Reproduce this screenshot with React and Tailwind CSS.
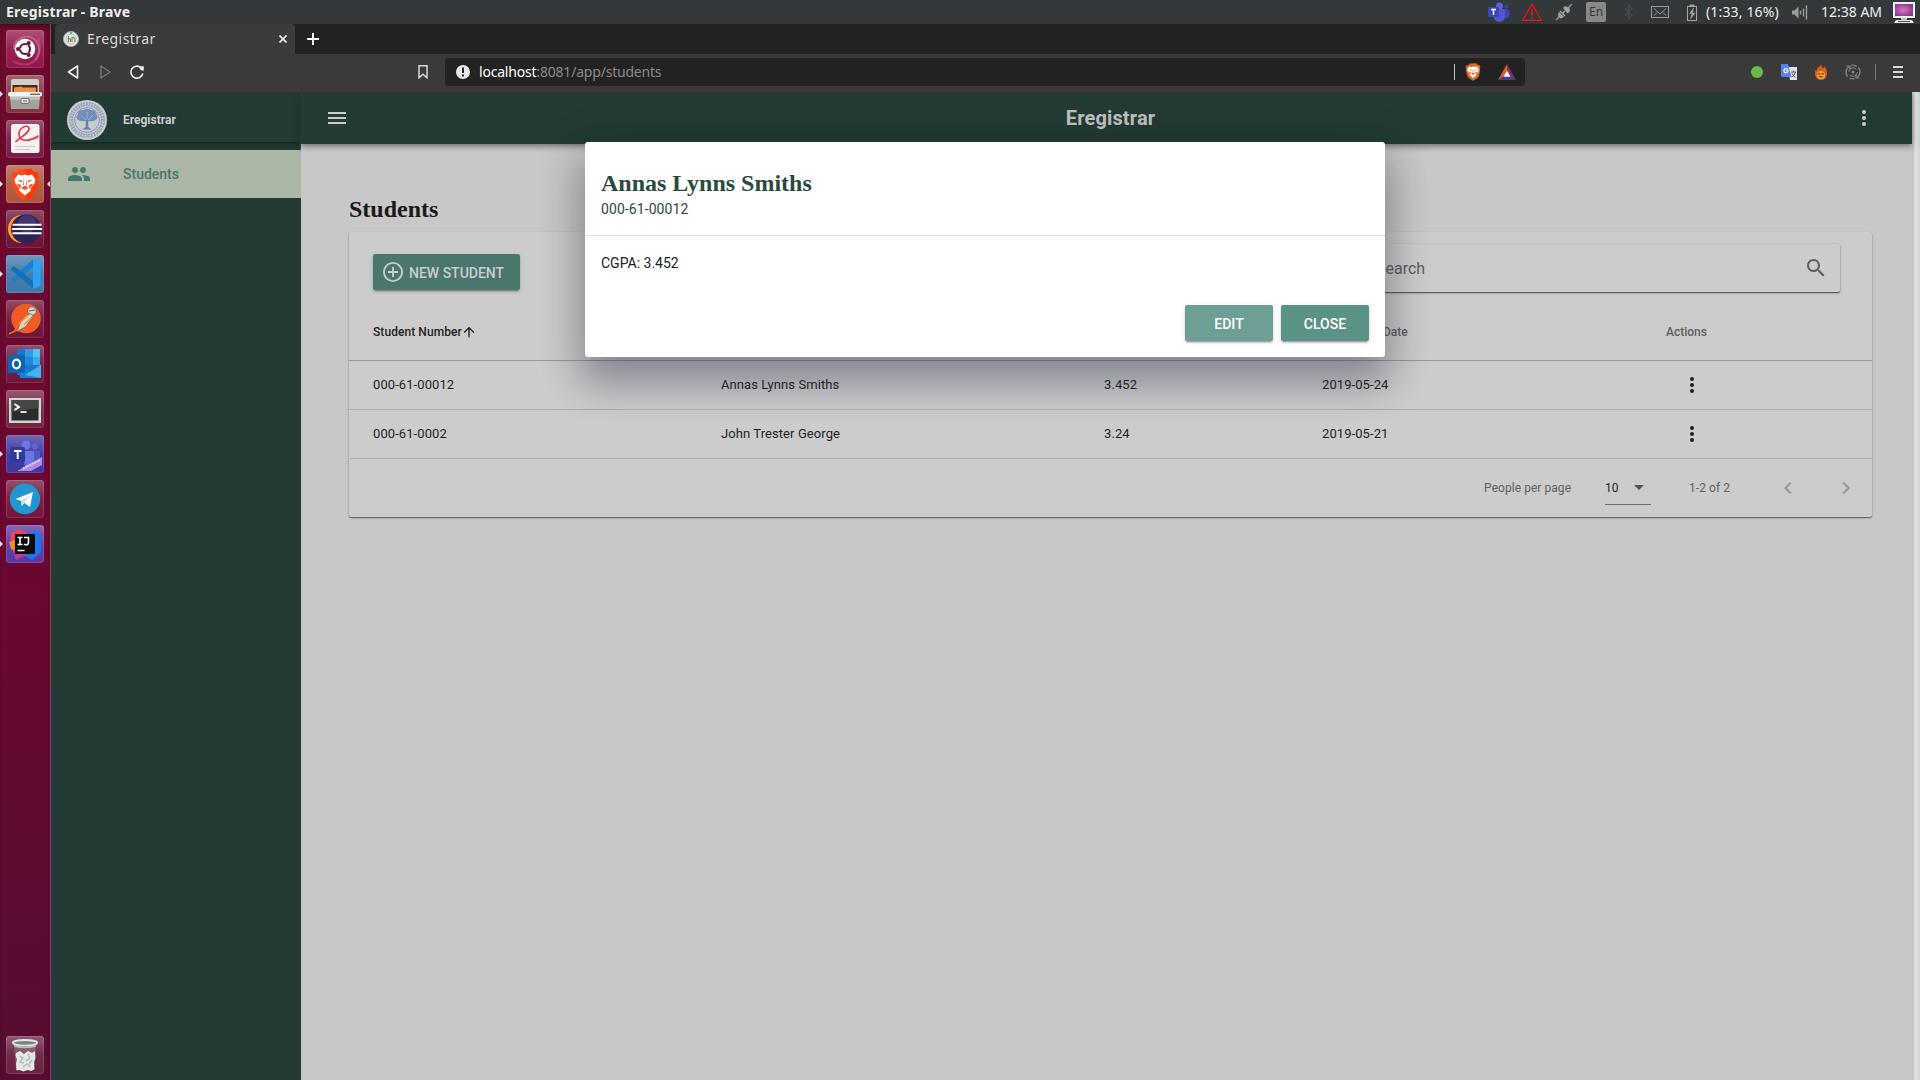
import React from "react";

const CHROME_FONT = "font-['Noto_Sans','Open_Sans',sans-serif]";

/* ---------- small shared icons ---------- */

function DotsVertical({ className }) {
  return (
    <svg viewBox="0 0 24 24" className={className} fill="currentColor">
      <circle cx="12" cy="6" r="2" />
      <circle cx="12" cy="12" r="2" />
      <circle cx="12" cy="18" r="2" />
    </svg>
  );
}

function BraveLion({ className, color = "#f4511e", edge = "#ff7a1a" }) {
  return (
    <svg viewBox="0 0 28 33" className={className}>
      <path d="M8 1h12l3 3h3l1.500 4-1 3 .5 3-3 11-4 4-6 3.500-6-3.500-4-4-3-11 .5-3-1-3L2 4h3z" fill={color} />
      <path d="M14 1h6l3 3h3l1.500 4-1 3 .5 3-3 11-4 4-6 3.500z" fill={edge} opacity=".55" />
      <path d="M7 6.500l4 1 3-1 3 1 4-1 3.500 5-1 4-4 5 .5 2-2.500 2-3.500 3-3.500-3-2.500-2 .5-2-4-5-1-4z" fill="#fff" />
      <path
        d="M6.500 11.500l5 1.300-1 1.700zM21.500 11.500l-5 1.300 1 1.700zM12.400 10.500l-.4 5.500 1 2.500-3 1.200 4 2.300 4-2.300-3-1.200 1-2.500-.4-5.500-.6 7.500h-2zM5.500 15.500l4 5.500.5-4zM22.500 15.500l-4 5.500-.5-4z"
        fill={color}
      />
    </svg>
  );
}

/* ---------- desktop panel ---------- */

function TopPanel() {
  return (
    <div className={`flex h-6 w-full items-center bg-[#33393b] text-[#eeeeec] ${CHROME_FONT}`}>
      <span className="ml-1.5 text-[14px] leading-6 font-bold whitespace-nowrap tracking-[0.2px]">Eregistrar - Brave</span>
      <div className="ml-auto flex h-6 items-center">
        <svg viewBox="0 0 22 20" className="h-5 w-[22px]">
          <circle cx="18.500" cy="4.500" r="2" fill="#3a41b0" />
          <rect x="13" y="7" width="8.500" height="9" rx="3" fill="#3c43b4" />
          <circle cx="11.500" cy="4" r="3.500" fill="#5a62d8" />
          <path d="M6 7h11v8a5.500 5 0 0 1-11 0z" fill="#5058d0" />
          <rect x="0" y="5" width="11" height="10" rx="1" fill="#3b45b8" />
          <path d="M3 7.500h5M5.500 7.500v5.500" stroke="#fff" strokeWidth="1.400" />
        </svg>
        <svg viewBox="0 0 20 18" className="ml-[12px] h-[18px] w-5" fill="none" stroke="#ee1111" strokeWidth="1.200">
          <path d="M10 1L19.300 17.300H.7z" />
          <path d="M10 6v6.500M10 14v2" strokeWidth="1.800" />
        </svg>
        <svg viewBox="0 0 18 18" className="ml-[13px] h-[18px] w-[18px]">
          <path d="M1 17l4-4M13 5l4-4" stroke="#8b8e8f" strokeWidth="1.600" />
          <path d="M4 9l5 5-3 1.500L3.500 14 3 11zM8 5l2-2 2.500 1L15 6l-.5 3-2 1.500z" fill="#a2a3a3" />
          <path d="M5 8l5 5M8 10l2-2" stroke="#a2a3a3" strokeWidth="1.500" />
        </svg>
        <span className="ml-[13px] flex h-5 w-5 items-center justify-center rounded-[2px] bg-[#888888] text-[12px] text-[#33393b]">En</span>
        <svg viewBox="0 0 10 16" className="ml-[18px] h-4 w-2.5" fill="none" stroke="#454b4d" strokeWidth="1.300">
          <path d="M1 4.500l7 7L4.500 15V1L8 4.500l-7 7" />
        </svg>
        <svg viewBox="0 0 18 12" className="ml-[17px] h-3 w-[18px]" fill="none" stroke="#9b9b9b" strokeWidth="1">
          <rect x=".5" y=".5" width="17" height="11" />
          <path d="M3 2.500l6 5.500 6-5.500M3 9.500l3-3M15 9.500l-3-3" />
        </svg>
        <svg viewBox="0 0 10 17" className="ml-[18px] h-[17px] w-2.5" fill="none" stroke="#a5a5a5" strokeWidth="1">
          <rect x=".5" y="2.500" width="9" height="14" />
          <path d="M3 1h4v1.500H3z" fill="#a5a5a5" />
          <path d="M6.500 4L2.500 9.500H5L3.500 15l4.500-6H5.500z" fill="#a5a5a5" strokeWidth=".4" />
        </svg>
        <span className="ml-[9px] w-[76px] text-[14px] leading-6 whitespace-nowrap tracking-[0.15px]">(1:33, 16%)</span>
        <svg viewBox="0 0 16 14" className="ml-[10px] h-[15px] w-4">
          <path d="M0 5h2.500L6.500 1v12L2.500 9H0z" fill="#9d9d9d" />
          <path d="M8.500 5v4M11.500 3v8M14.500 0v14" stroke="#9d9d9d" strokeWidth="1.400" />
        </svg>
        <span className="ml-[13px] w-[63px] text-[14px] leading-6 whitespace-nowrap tracking-[0px]">12:38 AM</span>
        <svg viewBox="0 0 22 21" className="mr-[5px] ml-[9px] h-[21px] w-[22px]">
          <defs>
            <radialGradient id="screen" cx=".45" cy=".5" r=".7">
              <stop offset="0" stopColor="#d874c0" />
              <stop offset="1" stopColor="#7a2c86" />
            </radialGradient>
          </defs>
          <rect width="22" height="16" fill="#f1f1f1" />
          <rect x="2" y="2" width="18" height="12" fill="url(#screen)" />
          <rect x="8" y="16" width="6" height="2" fill="#bbb" />
          <path d="M3 18h16l2 3H1z" fill="#e6e6e6" />
          <path d="M5 19.500h12" stroke="#555" />
        </svg>
      </div>
    </div>
  );
}

/* ---------- launcher ---------- */

const launcherItems = [
  {
    id: "dash",
    tile: "bg-[#93164a]",
    art: (
      <>
        <path d="M8 20C7 9 20 3 28 9c7 6 6 16 1 21" fill="none" stroke="#d58aa8" strokeWidth="2" opacity=".5" />
        <path d="M32 8c4 9 2 22-9 26C14 36 7 31 7 31" fill="none" stroke="#c4708f" strokeWidth="2" opacity=".4" />
        <circle cx="19" cy="19" r="10.200" fill="#fff" />
        <circle cx="19" cy="19" r="5" fill="none" stroke="#6b0f35" strokeWidth="2.200" />
        <path d="M19 19l-8 0M19 19l4.500 8M19 19l4.500-8" stroke="#fff" strokeWidth="1" />
        <circle cx="12" cy="19" r="2" fill="#6b0f35" />
        <circle cx="22.700" cy="25" r="2" fill="#6b0f35" />
        <circle cx="22.700" cy="13" r="2" fill="#6b0f35" />
      </>
    ),
  },
  {
    id: "files",
    tile: "bg-[#86323d]",
    arrow: true,
    art: (
      <>
        <path d="M5 6q0-2 2-2h24q2 0 2 2v13H5z" fill="#cfcfcd" />
        <path d="M6.500 10h25v8h-25z" fill="#4f2a16" />
        <path d="M8 12.500l7-1 2 1h13v6H8z" fill="#e9924e" />
        <path d="M4 20h30l-1 14H5z" fill="#a2a3a1" />
        <path d="M4 20h30l-.4 5H4.300z" fill="#bdbdbb" />
        <rect x="2" y="17" width="34" height="4.500" rx="2" fill="#f4f4f2" />
        <path d="M24 19.300h10" stroke="#77716c" strokeWidth="1.600" />
        <rect x="15" y="23.500" width="8" height="5" rx="1" fill="#e2e2e0" stroke="#6f6f6d" />
        <path d="M17 26h4" stroke="#666" />
      </>
    ),
  },
  {
    id: "pdf",
    tile: "bg-[#7b1a46]",
    art: (
      <>
        <rect x="5" y="4" width="28.500" height="29" rx="2.500" fill="#f3f1f1" />
        <path d="M9.500 22C15 17 24 12 23 8c-1-4-10-1-10 6 0 8 10 8 19 2" fill="none" stroke="#dd3a40" strokeWidth="1.600" />
        <path d="M20 19.500q7-1 12.500-4.500v3c-4 2-8 3-12.500 1.500z" fill="#e05a5a" opacity=".7" />
        <path d="M9 26.500h20M9 29.500h15" stroke="#cfcaca" strokeWidth="1.200" />
      </>
    ),
  },
  { id: "brave", tile: "bg-[#b1563f]", arrow: true, active: true, art: null },
  {
    id: "eclipse",
    tile: "bg-[#6a1238]",
    art: (
      <>
        <circle cx="16" cy="19" r="14" fill="#f7a12d" />
        <circle cx="19" cy="19" r="14" fill="#6a1238" />
        <circle cx="20.500" cy="19" r="14.500" fill="#2d2358" />
        <circle cx="21" cy="14" r="9" fill="#5a4f92" opacity=".45" />
        <path d="M6.500 14.800h29M6 19h30M6.500 23.200h29" stroke="#fff" strokeWidth="1.900" />
      </>
    ),
  },
  {
    id: "code",
    tile: "bg-[#3f78ab]",
    arrow: true,
    art: (
      <>
        <path d="M27 12L8 27.500 4.500 24.500 27 4.500z" fill="#1b80cf" />
        <path d="M27 26L8 11 4.500 14 27 33.500z" fill="#1470b8" />
        <path d="M27 4l7.500 3.500v23L27 34z" fill="#2ba3f3" />
      </>
    ),
  },
  {
    id: "postman",
    tile: "bg-[#6e1438]",
    art: (
      <>
        <circle cx="20" cy="18.500" r="14.800" fill="#f15a25" />
        <circle cx="26" cy="11" r="4.200" fill="#dcd7d2" stroke="#77675e" strokeWidth=".8" />
        <path d="M24 13.500l3 2-7 11-9 5 4-10z" fill="#d9d4cf" stroke="#776a62" strokeWidth=".8" />
        <path d="M22 15l-9 9M25 18l-7 7" stroke="#f39b2e" strokeWidth="1.500" />
        <path d="M23 11l6-1" stroke="#666" />
        <path d="M3 34l8-4M11 26l-3 6" stroke="#ee6a2c" strokeWidth="1.500" />
      </>
    ),
  },
  {
    id: "outlook",
    tile: "bg-[#6f1440]",
    art: (
      <>
        <rect x="11" y="4" width="23" height="26" rx="1" fill="#1976c8" />
        <path d="M19 4h15v8H19z" fill="#2f9be4" />
        <path d="M27 4h7v8h-7z" fill="#52c4f4" />
        <path d="M19 12h8v8h-8z" fill="#2189dc" />
        <path d="M27 12h7v8h-7z" fill="#38ace9" />
        <path d="M14 20l11 7 10-8v14H14z" fill="#1684d4" />
        <path d="M35 20v13l-16-3z" fill="#42b5ef" />
        <rect x="2" y="10" width="17" height="18" rx="1" fill="#0f62b4" />
        <ellipse cx="10.500" cy="19" rx="3.600" ry="4.300" fill="none" stroke="#fff" strokeWidth="2.200" />
      </>
    ),
  },
  {
    id: "terminal",
    tile: "bg-[#73233f]",
    art: (
      <>
        <rect x="3" y="8" width="32" height="25" fill="#d6d6d0" />
        <rect x="5.500" y="10" width="27" height="20.500" fill="#2a2d2c" />
        <path d="M5.500 10h27v8l-27 4z" fill="#434746" />
        <path d="M8.500 14l4.500 3-4.500 3" fill="none" stroke="#fff" strokeWidth="1.800" />
        <path d="M14.500 22h6" stroke="#fff" strokeWidth="1.700" />
      </>
    ),
  },
  {
    id: "teams",
    tile: "bg-[#3d36a0]",
    arrow: true,
    art: (
      <>
        <circle cx="20" cy="10" r="4.500" fill="#6f78e0" />
        <circle cx="29" cy="11.500" r="3" fill="#5f68d4" />
        <path d="M17 16h11v13q-2 5-9 4z" fill="#6c75e2" />
        <path d="M28 16h6v10l-6 3z" fill="#5059c8" />
        <rect x="4" y="12" width="15" height="15" rx="1.500" fill="#2e3a9e" />
        <path d="M8 16h7.500M11.700 16v8" stroke="#fff" strokeWidth="1.900" />
        <path d="M12 35.500L36 22v8l-11 6H12z" fill="#b08ae2" />
        <path d="M17 33.500l17-8.500" stroke="#f2eafc" strokeWidth="1.800" strokeDasharray="1.500 1" />
      </>
    ),
  },
  {
    id: "telegram",
    tile: "bg-[#74163c]",
    art: (
      <>
        <circle cx="19" cy="19" r="15.200" fill="#2296cf" />
        <path d="M9.500 19L27 12l-3 15-5.500-4-3 3v-5z" fill="#fff" />
        <path d="M15 21.500l9-6.500-6.500 8-2 3z" fill="#c5d9e6" />
      </>
    ),
  },
  {
    id: "intellij",
    tile: "bg-[#5a36a4]",
    arrow: true,
    art: (
      <>
        <path d="M5 8l9-4 10 7-8 14-12-7z" fill="#f5415c" />
        <path d="M3 17l7-2v12l-5-3z" fill="#f78a26" />
        <path d="M22 12l7-8 6 7v16l-9 8-8-5z" fill="#1878f0" />
        <path d="M7 26l8-3 7 6-12 6z" fill="#b43ea6" />
        <rect x="9" y="9" width="20" height="20" fill="#0b0b0b" />
        <path d="M11.500 12.500h5M14 12.500v7M11.500 19.500h5M18 12.500h4.500v5q0 2.300-2.500 2.300-1.200 0-2-.8M11.500 25.500h7" fill="none" stroke="#fff" strokeWidth="1.600" />
      </>
    ),
  },
];

const trashItem = {
  id: "trash",
  tile: "bg-[#6b2040]",
  art: (
    <>
      <path d="M8 9h22l-2 25H10z" fill="#8a6c79" opacity=".7" />
      <path d="M10 17l4-2 4 3 4-3 4 2 3-2 .5 7-1.500 4 .5 7-3 2-4-1-4 1.500-4-1.500-3 .5-.5-7 1-4-1.500-4z" fill="#e4e7e5" />
      <path d="M13 20l4 2-3 4 4 1M22 18l2 4-4 3M26 24l-3 4M17 31l4-3 4 3" fill="none" stroke="#b3b8b6" strokeWidth="1.300" />
      <path d="M8 10q11 3 22 0" fill="none" stroke="#b9bcba" strokeWidth="1.500" />
      <ellipse cx="19" cy="6.800" rx="12.200" ry="2.800" fill="#7f8280" stroke="#e3e5e3" strokeWidth="1.800" />
    </>
  ),
};

function LauncherTile({ item }) {
  return (
    <div className="flex h-[38px] w-[50px] items-center">
      <div className="w-[6px]">
        {item.arrow && (
          <svg viewBox="0 0 3 6" className="h-1.5 w-[3px]">
            <path d="M0 0l3 3-3 3z" fill="#e6dfe2" />
          </svg>
        )}
      </div>
      <div
        className={`flex h-[38px] w-[38px] items-center justify-center rounded-[3px] bg-linear-to-b from-white/25 via-white/5 to-transparent shadow-[inset_0_0_1px_1px_rgba(255,255,255,0.14)] ${item.tile}`}
      >
        {item.art ? (
          <svg viewBox="0 0 38 38" className="h-[38px] w-[38px]">{item.art}</svg>
        ) : (
          <BraveLion className="h-[33px] w-7" color="#fb4b18" edge="#ff2a00" />
        )}
      </div>
      <div className="flex w-[6px] justify-end">
        {item.active && (
          <svg viewBox="0 0 3 6" className="h-1.5 w-[3px]">
            <path d="M3 0L0 3l3 3z" fill="#e6dfe2" />
          </svg>
        )}
      </div>
    </div>
  );
}

function Launcher() {
  return (
    <div className="flex w-[51px] shrink-0 flex-col border-r border-[#8e4062] bg-linear-to-b from-[#6e0a2a] via-[#6b0731] to-[#560c32] pt-1.5 shadow-[inset_0_4px_4px_-2px_rgba(0,0,0,0.4)]">
      <div className="flex flex-col gap-[7px]">
        {launcherItems.map((item) => (
          <LauncherTile key={item.id} item={item} />
        ))}
      </div>
      <div className="mt-auto pb-[6px]">
        <LauncherTile item={trashItem} />
      </div>
    </div>
  );
}

/* ---------- browser chrome ---------- */

function TabStrip() {
  return (
    <div className={`flex h-[30px] items-end bg-[#222222] ${CHROME_FONT}`}>
      <div className="ml-1 flex h-[30px] w-60 items-center rounded-t-[4px] bg-[#3b3b3b]">
        <svg viewBox="0 0 16 16" className="ml-2 h-4 w-4">
          <circle cx="8" cy="8" r="7.500" fill="#e9e9ea" stroke="#a9adc4" strokeWidth="1" />
          <circle cx="8" cy="8" r="5" fill="#e8e6d2" stroke="#a9c69a" strokeWidth="1" />
          <path d="M5.500 5v6M5.500 8h2v3M9 6v5M9 7q3-2 3 4" fill="none" stroke="#857b58" strokeWidth="1.100" />
          <circle cx="8" cy="1.800" r="1.300" fill="#5fa6d8" />
        </svg>
        <span className="ml-2 text-[14px] leading-[30px] text-[#dcdcdc] tracking-[0.45px]">Eregistrar</span>
        <svg viewBox="0 0 8 8" className="mr-2 ml-auto h-2 w-2" stroke="#f0f0f0" strokeWidth="1.700">
          <path d="M.5.5l7 7M7.500.5l-7 7" />
        </svg>
      </div>
      <svg viewBox="0 0 12 12" className="mb-[9px] ml-3 h-3 w-3" stroke="#ffffff" strokeWidth="2">
        <path d="M6 0v12M0 6h12" />
      </svg>
    </div>
  );
}

function Toolbar() {
  return (
    <div className={`flex h-[38px] items-center bg-[#3a3a3a] pb-0.5 ${CHROME_FONT}`}>
      <svg viewBox="0 0 12 14" className="ml-4 h-3.5 w-3" fill="none" stroke="#f0f0f0" strokeWidth="1.600" strokeLinejoin="round">
        <path d="M10.500 1v12L1.500 7z" />
      </svg>
      <svg viewBox="0 0 12 14" className="ml-[21px] h-3.5 w-3" fill="none" stroke="#777777" strokeWidth="1.400" strokeLinejoin="round">
        <path d="M1 1v12l9-6z" />
      </svg>
      <svg viewBox="0 0 14 14" className="ml-[18px] h-3.5 w-3.5" fill="none" stroke="#f0f0f0" strokeWidth="1.600">
        <path d="M12.800 8.500a6 6 0 1 1-2-6" />
        <path d="M9.500 1.500h4v4q-4 0-4-4z" fill="#f0f0f0" strokeWidth=".5" />
      </svg>
      <svg viewBox="0 0 10 14" className="ml-[274px] h-3.5 w-2.5" fill="none" stroke="#d8d8d8" strokeWidth="1.500">
        <path d="M1 .8h8v12l-4-3.500-4 3.500z" />
      </svg>
      <div className="ml-[17px] flex h-7 w-[1080px] items-center rounded-[4px] bg-[#222222]">
        <svg viewBox="0 0 14 14" className="ml-[11px] h-3.5 w-3.5">
          <circle cx="7" cy="7" r="7" fill="#e8e8e8" />
          <path d="M7 2.500v5.500M7 9.500v2" stroke="#222222" strokeWidth="2" />
        </svg>
        <span className="ml-[9px] text-[14px] leading-7 whitespace-nowrap text-[#8a8a8a] tracking-[-0.2px]">
          <span className="text-white">localhost</span>:8081/app/students
        </span>
        <div className="ml-auto h-4 w-px bg-[#c4c4c4]" />
        <BraveLion className="ml-2.5 h-[18px] w-4" color="#dd6327" edge="#e07a3a" />
        <svg viewBox="0 0 18 16" className="mr-[9px] ml-[17px] h-4 w-[18px]">
          <path d="M9 0L0 16l5.500-3L9 7z" fill="#e25a2c" />
          <path d="M9 0l9 16-5.500-3L9 7z" fill="#83305f" />
          <path d="M0 16h18l-5.500-3.500h-7z" fill="#4c3a9a" />
          <path d="M9 6.500l3.500 6.300h-7z" fill="#fff" />
        </svg>
      </div>
      <div className="ml-auto flex items-center">
        <div className="h-3 w-3 rounded-full bg-[#6fb94a]" />
        <svg viewBox="0 0 16 16" className="ml-[18px] h-4 w-4">
          <path d="M7 3h9v13H9z" fill="#dfe3e8" />
          <path d="M10 8h5M12.500 6.500v1.500M14.500 8q-1 4-4 5M11 9.500q1 2.500 3.500 4" fill="none" stroke="#5f6a74" />
          <path d="M0 0h7l3.500 13H1.500Q0 13 0 11.500z" fill="#5a80ea" />
          <path d="M7 5.500q-1.500-1.500-3-.7-2 1.500-.5 3.500 2 1.200 3.500-.8v-.8H5" fill="none" stroke="#fff" strokeWidth="1.100" />
        </svg>
        <svg viewBox="0 0 12 16" className="ml-[18px] h-4 w-3">
          <path d="M6.500 0q-.5 3 2 4.500l1.500-2.500q0 2 1.500 4 1 3 .3 5-1 5-5.800 5t-5.800-5Q-.4 8 .5 6L2 7q-.5-2 1-3.500 3-1.500 3.500-3.500z" fill="#dd5a1e" />
          <circle cx="6" cy="11" r="4" fill="#efa32c" />
          <path d="M3.500 9h1.700v1.500H3.500zM6.800 9h1.700v1.500H6.800zM3.500 12.300q2.500 2.200 5 0z" fill="#4a2508" />
        </svg>
        <svg viewBox="0 0 16 16" className="ml-[18px] h-4 w-4" fill="none" stroke="#868686" strokeWidth="1.300">
          <path d="M2.500 12.500A7 7 0 0 1 4 2.500M13.500 3.500A7 7 0 0 1 12 13.500M6.500 1.200A7 7 0 0 1 12 2.500M9.500 14.800A7 7 0 0 1 4.500 14" />
          <circle cx="8" cy="8" r="4.300" strokeWidth="1" strokeDasharray="10 3.500" />
          <circle cx="8" cy="8" r="1.500" fill="#868686" stroke="none" />
          <path d="M1.500 2h3.500v3.500M14.500 14H11v-3.500" strokeWidth="1.200" />
        </svg>
        <div className="ml-[14px] h-4 w-px bg-[#777777]" />
        <div className="mr-[17px] ml-[17px] flex w-2.5 flex-col gap-[3px]">
          <div className="h-0.5 bg-[#d8d8d8]" />
          <div className="h-0.5 bg-[#d8d8d8]" />
          <div className="h-0.5 bg-[#d8d8d8]" />
        </div>
      </div>
    </div>
  );
}

/* ---------- application ---------- */

function UniversitySeal() {
  return (
    <svg viewBox="0 0 40 40" className="h-10 w-10">
      <circle cx="20" cy="20" r="20" fill="#cacaca" />
      <circle cx="20" cy="20" r="15.800" fill="none" stroke="#8a9fc0" strokeWidth="4" strokeDasharray="1.800 0.900" />
      <circle cx="20" cy="20" r="16" fill="none" stroke="#cacaca" strokeWidth="1" strokeDasharray="2 1.600" />
      <circle cx="20" cy="20" r="12.400" fill="none" stroke="#7f98bf" strokeWidth="1" />
      <path d="M11 20q-3-3 0-6 0-4 5-4 4-2 8 0 5 0 5 4 3 3 0 6-4 2-9 1-5 1-9-1z" fill="#6f8ebb" />
      <path d="M19 18h2l.3 9 3.200 2.500h-9l3.200-2.500z" fill="#5d80b4" />
      <path d="M14 15l5 5M26 15l-5 5M20 12v8" stroke="#a9b7cb" strokeWidth=".8" />
    </svg>
  );
}

function Sidebar() {
  return (
    <div className="flex w-[250px] shrink-0 flex-col bg-[#233b34]">
      <div className="h-[58px] border-r border-[#3c504a]">
        <div className="flex h-[50px] items-center shadow-[0_2px_4px_-1px_rgba(0,0,0,0.35),0_1px_8px_rgba(0,0,0,0.15)]">
          <div className="mt-[6px] ml-4">
            <UniversitySeal />
          </div>
          <span className="mt-[5px] ml-4 text-[12px] font-bold text-[#cccccc]">Eregistrar</span>
        </div>
      </div>
      <div className="flex h-12 items-center bg-[#a9b7a4] text-[#46776d]">
        <svg viewBox="0 0 24 24" className="ml-4 h-6 w-6" fill="currentColor">
          <path d="M16 11c1.660 0 2.990-1.340 2.990-3S17.660 5 16 5s-3 1.340-3 3 1.340 3 3 3zm-8 0c1.660 0 2.990-1.340 2.990-3S9.660 5 8 5 5 6.340 5 8s1.340 3 3 3zm0 2c-2.330 0-7 1.170-7 3.500V19h14v-2.500c0-2.330-4.670-3.500-7-3.500zm8 0c-.29 0-.62.020-.97.050 1.160.84 1.970 1.970 1.970 3.450V19h6v-2.500c0-2.330-4.670-3.500-7-3.500z" />
        </svg>
        <span className="ml-8 text-[14px] font-medium">Students</span>
      </div>
    </div>
  );
}

function AppHeader() {
  return (
    <div className="z-10 flex h-[52px] shrink-0 items-center justify-between bg-[#233b34] px-6 text-[#cccccc] shadow-[0_2px_4px_-1px_rgba(0,0,0,0.25),0_4px_5px_0_rgba(0,0,0,0.16),0_1px_10px_0_rgba(0,0,0,0.14)]">
      <div className="ml-[3px] flex w-[18px] flex-col gap-[3px]">
        <div className="h-0.5 bg-current" />
        <div className="h-0.5 bg-current" />
        <div className="h-0.5 bg-current" />
      </div>
      <span className="ml-[23px] text-[20px] font-bold tracking-[0.15px] text-[#bdc0bf]">Eregistrar</span>
      <DotsVertical className="mr-3 h-6 w-6" />
    </div>
  );
}

const students = [
  { number: "000-61-00012", name: "Annas Lynns Smiths", cgpa: "3.452", date: "2019-05-24" },
  { number: "000-61-0002", name: "John Trester George", cgpa: "3.24", date: "2019-05-21" },
];

const COLUMNS = "grid grid-cols-[348px_383px_218px_344px_206px] pl-6 items-center";

function StudentsCard() {
  return (
    <div className="flex h-[285px] flex-col rounded-[2px] bg-[#cccccc] text-[#1f1f1f] shadow-[0_1px_1px_0_rgba(0,0,0,0.45),0_1px_3px_0_rgba(0,0,0,0.2)]">
      <div className="flex h-[68px] items-start justify-between pt-3 pr-8 pl-6">
        <button className="mt-2.5 flex h-9 w-[147px] items-center rounded-[2px] bg-[#49766d] pl-2 text-[#cccccc] shadow-[0_3px_1px_-2px_rgba(0,0,0,0.2),0_2px_2px_0_rgba(0,0,0,0.14),0_1px_5px_0_rgba(0,0,0,0.12)]">
          <svg viewBox="0 0 24 24" className="h-6 w-6" fill="none" stroke="currentColor" strokeWidth="1.900">
            <circle cx="12" cy="12" r="9.100" />
            <path d="M12 7v10M7 12h10" />
          </svg>
          <span className="ml-1 pt-0.5 text-[14px] font-medium whitespace-nowrap">NEW STUDENT</span>
        </button>
        <div className="flex h-12 w-[480px] items-center rounded-[2px] pr-3 pl-4 text-[#5f5f5f] shadow-[0_1px_1px_0_rgba(0,0,0,0.5),0_1px_3px_0_rgba(0,0,0,0.25)]">
          <span className="pt-0.5 text-[16px]">Search</span>
          <svg viewBox="0 0 24 24" className="ml-auto h-6 w-6" fill="currentColor">
            <path d="M15.500 14h-.79l-.28-.27C15.410 12.590 16 11.110 16 9.500 16 5.910 13.090 3 9.500 3S3 5.910 3 9.500 5.910 16 9.500 16c1.610 0 3.090-.59 4.230-1.570l.27.28v.79l5 4.990L20.490 19l-4.990-5zm-6 0C7.010 14 5 11.990 5 9.500S7.010 5 9.500 5 14 7.010 14 9.500 11.990 14 9.500 14z" />
          </svg>
        </div>
      </div>
      <div className={`${COLUMNS} h-[61px] border-b border-[#989898] pt-1 text-[12px] font-medium text-[#606060]`}>
        <span className="flex items-center text-[#1f1f1f] tracking-[0.07px]">
          Student Number
          <svg viewBox="0 0 24 24" className="-ml-px h-4 w-4" fill="#1f1f1f">
            <path d="M4 12l1.410 1.410L11 7.830V20h2V7.830l5.580 5.590L20 12l-8-8-8 8z" />
          </svg>
        </span>
        <span />
        <span />
        <span className="pl-[61px]">Date</span>
        <span>Actions</span>
      </div>
      {students.map((s) => (
        <div key={s.number} className={`${COLUMNS} h-[49px] border-b border-[#b0b0b0] text-[13px] tracking-[0.08px]`}>
          <span>{s.number}</span>
          <span>{s.name}</span>
          <span>{s.cgpa}</span>
          <span>{s.date}</span>
          <DotsVertical className="ml-[14px] h-6 w-6" />
        </div>
      ))}
      <div className="flex flex-1 items-center justify-end text-[12px] text-[#606060] tracking-[0.05px]">
        <span>People per page</span>
        <div className="ml-[34px] flex h-[34px] w-[46px] items-center border-b border-[#707070]">
          <span className="text-[#1f1f1f]">10</span>
          <svg viewBox="0 0 10 5" className="mr-[7px] ml-auto h-[5px] w-2.5">
            <path d="M0 0h10L5 5z" fill="#555555" />
          </svg>
        </div>
        <span className="ml-[38px]">1-2 of 2</span>
        <svg viewBox="0 0 24 24" className="ml-[46px] h-6 w-6 -scale-x-100" fill="#969696">
          <path d="M10 6L8.590 7.410 13.170 12l-4.580 4.590L10 18l6-6z" />
        </svg>
        <svg viewBox="0 0 24 24" className="mr-[14px] ml-[34px] h-6 w-6" fill="#969696">
          <path d="M10 6L8.590 7.410 13.170 12l-4.580 4.590L10 18l6-6z" />
        </svg>
      </div>
    </div>
  );
}

function StudentDialog() {
  return (
    <div className="absolute top-[50px] left-[534px] z-20 flex h-[215px] w-[800px] flex-col rounded-[3px] bg-white shadow-[0_24px_38px_3px_rgba(40,40,80,0.33),0_9px_46px_8px_rgba(0,0,0,0.12)]">
      <div className="h-[94px] border-b border-[#dedede] px-4 pt-[25px] text-[#2a4a40]">
        <h2 className="font-['Liberation_Serif',serif] text-[24px] leading-8 font-bold">Annas Lynns Smiths</h2>
        <div className="text-[14px] leading-5 tracking-[0.08px]">000-61-00012</div>
      </div>
      <div className="px-4 pt-[17px] text-[14px] leading-5 text-[#212121]">CGPA: 3.452</div>
      <div className="mt-auto flex justify-end gap-2 p-4 text-[14px] font-medium text-white">
        <button className="h-9 w-[88px] rounded-[2px] bg-[#6e9f96] pt-0.5 shadow-[0_3px_1px_-2px_rgba(0,0,0,0.2),0_2px_2px_0_rgba(0,0,0,0.14),0_1px_5px_0_rgba(0,0,0,0.12)]">EDIT</button>
        <button className="h-9 w-[88px] rounded-[2px] bg-[#5b9287] pt-0.5 shadow-[0_3px_1px_-2px_rgba(0,0,0,0.2),0_2px_2px_0_rgba(0,0,0,0.14),0_1px_5px_0_rgba(0,0,0,0.12)]">CLOSE</button>
      </div>
    </div>
  );
}

function Application() {
  return (
    <div className="relative flex min-h-0 flex-1 overflow-hidden bg-[#c8c8c8] font-['Roboto',sans-serif]">
      <Sidebar />
      <div className="flex flex-1 flex-col">
        <AppHeader />
        <main className="pt-[49px] pr-10 pl-12">
          <h1 className="h-[39px] font-['Liberation_Serif',serif] text-[24px] leading-8 font-bold text-[#1a1a1a]">Students</h1>
          <StudentsCard />
        </main>
      </div>
      <div className="w-2 rounded-t-[4px] bg-linear-to-r from-[#bdbdbd] via-[#e2e2e2] to-[#d2d2d2]" />
      <StudentDialog />
    </div>
  );
}

export default function App() {
  return (
    <div className="flex h-[1080px] w-[1920px] flex-col overflow-hidden bg-[#222222]">
      <TopPanel />
      <div className="flex min-h-0 flex-1">
        <Launcher />
        <div className="flex min-w-0 flex-1 flex-col">
          <TabStrip />
          <Toolbar />
          <Application />
        </div>
      </div>
    </div>
  );
}
